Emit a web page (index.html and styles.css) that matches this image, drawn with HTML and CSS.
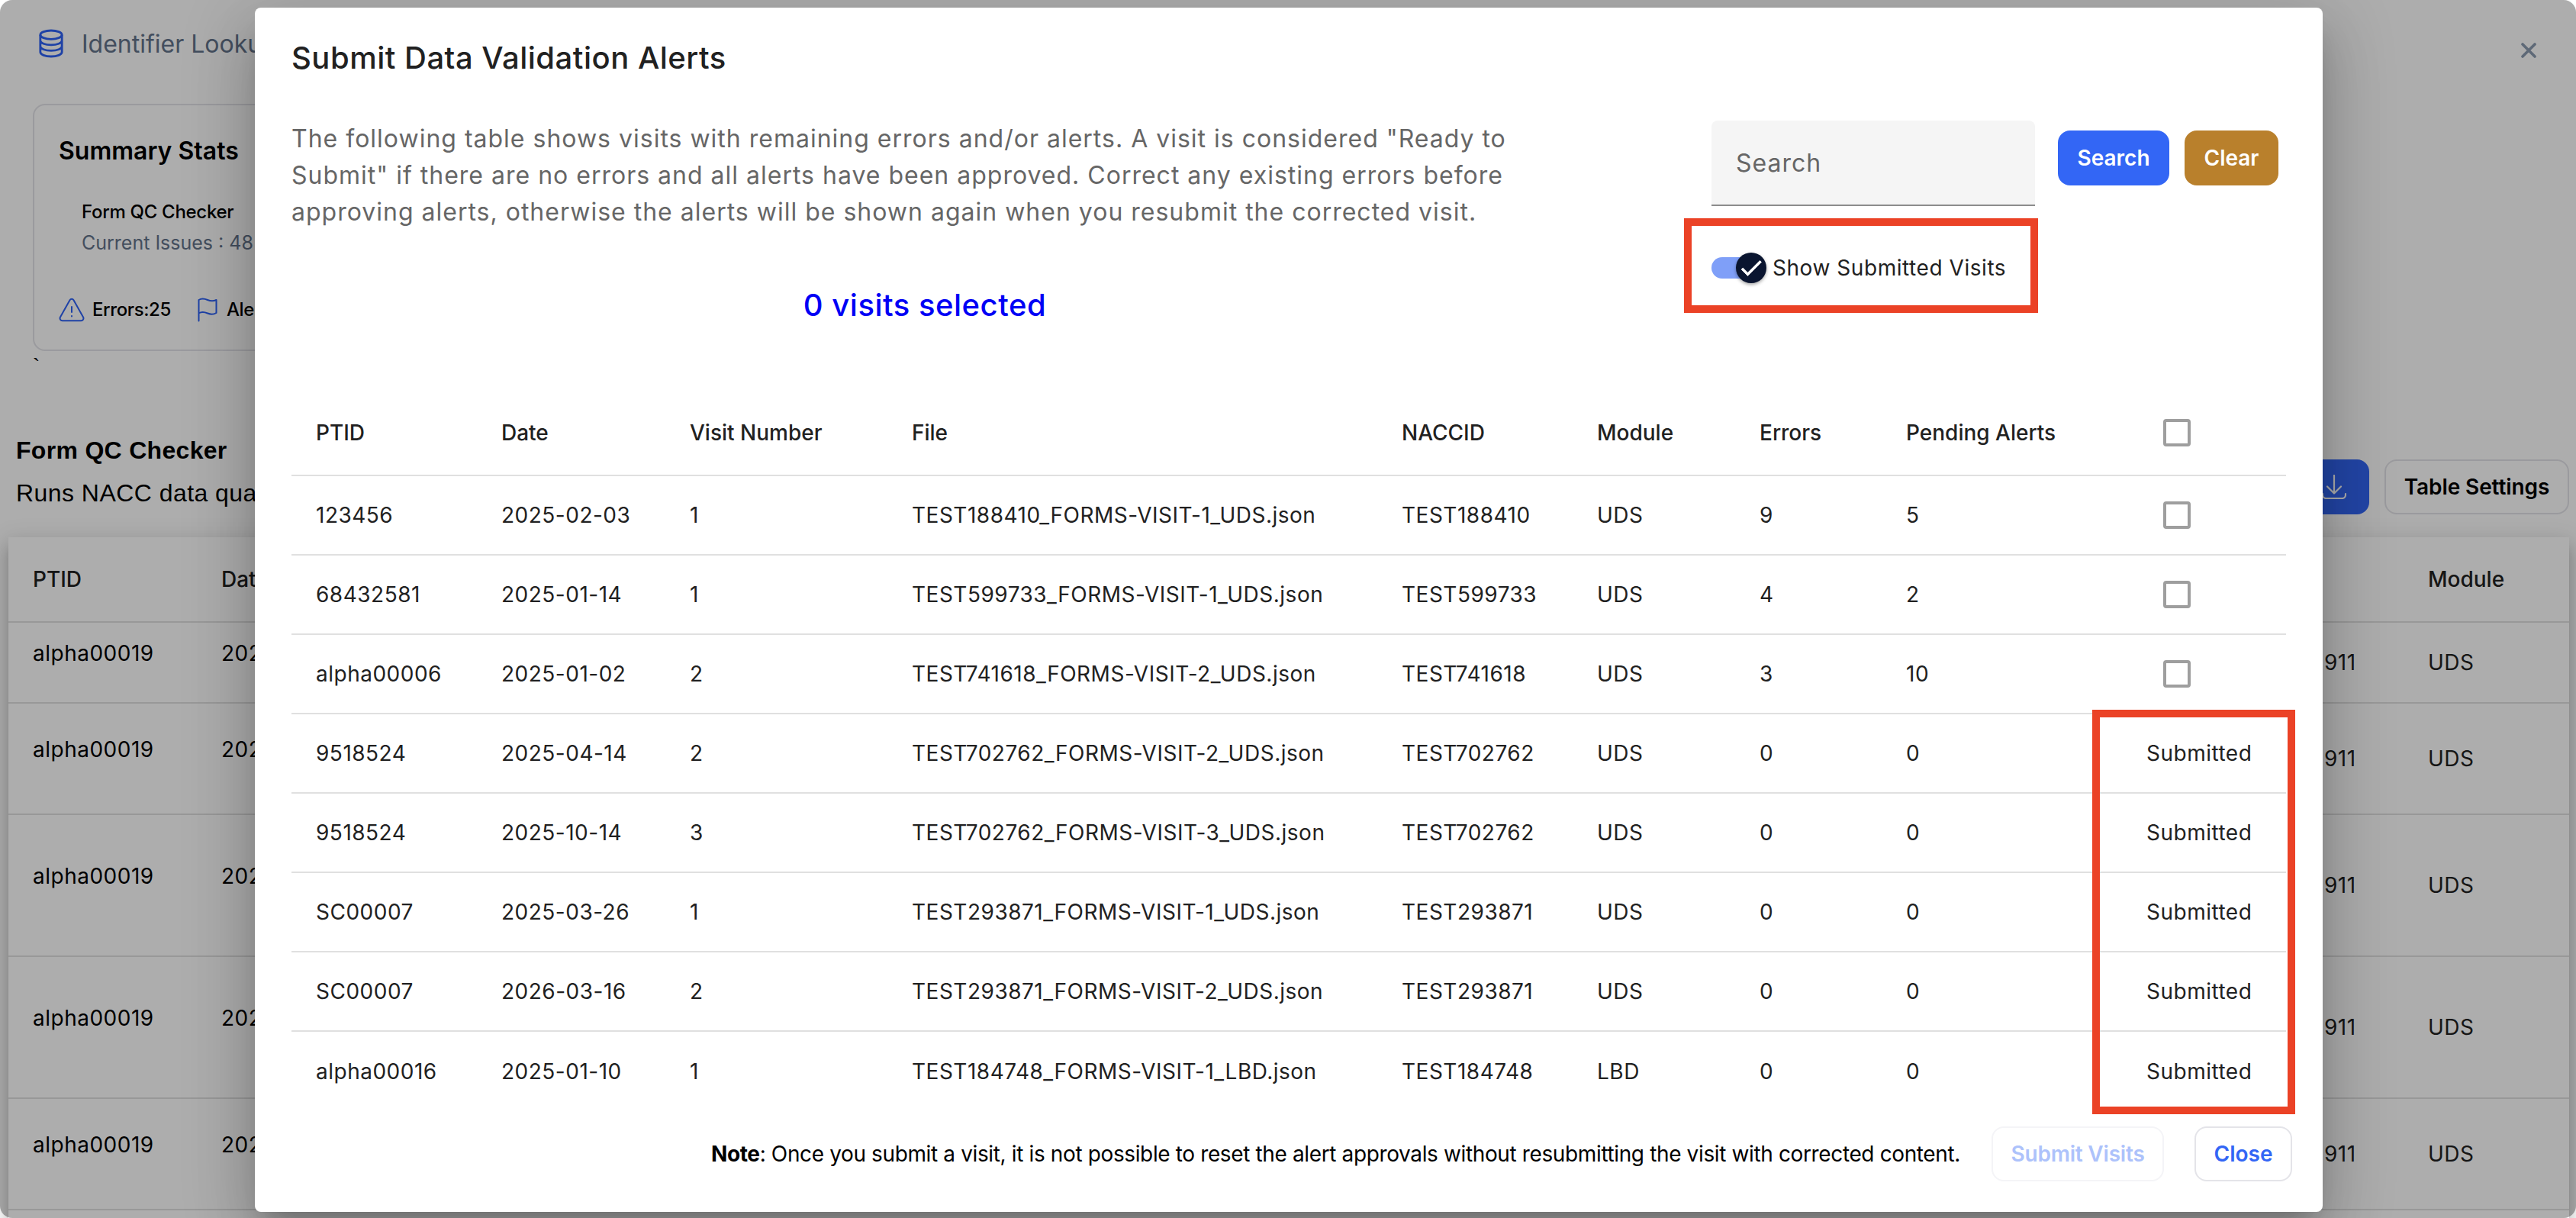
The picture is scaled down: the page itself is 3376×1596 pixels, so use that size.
FILE: index.html
```html
<!DOCTYPE html>
<html lang="en">
<head>
    <meta charset="UTF-8">
    <meta name="viewport" content="width=device-width, initial-scale=1.0">
    <title>Submit Data Validation Alerts</title>
    <link rel="stylesheet" href="styles.css">
</head>
<body>
    <div class="page">
        <header class="topbar">
            <svg class="icon-db" viewBox="0 0 36 40" fill="none" stroke="#2f62f5" stroke-width="3">
                <ellipse cx="18" cy="8" rx="15" ry="6"/>
                <path d="M3 8v24c0 3.300 6.700 6 15 6s15-2.700 15-6V8M3 16c0 3.300 6.700 6 15 6s15-2.700 15-6M3 24c0 3.300 6.700 6 15 6s15-2.700 15-6"/>
            </svg>
            <span class="topbar-title">Identifier Lookup</span>
            <svg class="icon-close" viewBox="0 0 20 20" stroke="#8b9bb0" stroke-width="3.6" stroke-linecap="round">
                <path d="M2 2l16 16M18 2L2 18"/>
            </svg>
        </header>

        <section class="stats">
            <h2>Summary Stats</h2>
            <p class="stats-name">Form QC Checker</p>
            <p class="stats-issues">Current Issues : 48</p>
            <div class="stats-counts">
                <svg class="icon-warn" viewBox="0 0 34 32" fill="none" stroke="#2f62f5" stroke-width="2" stroke-linecap="round" stroke-linejoin="round">
                    <path d="M14.500 3.200L2 25.500a3.200 3.200 0 0 0 2.800 4.800h24.400a3.200 3.200 0 0 0 2.800-4.800L19.500 3.200a2.900 2.900 0 0 0-5 0zM17 12v7M17 24v.6"/>
                </svg>
                <span>Errors:25</span>
                <svg class="icon-flag" viewBox="0 0 26 32" fill="none" stroke="#2f62f5" stroke-width="2" stroke-linecap="round" stroke-linejoin="round">
                    <path d="M1.500 30.500V3c4-2.500 8-1.500 11.500 0s7.500 2 11.500 0v17c-4 2.500-8 2-11.500.5s-7.500-2.500-11.500 0"/>
                </svg>
                <span>Alerts:</span>
            </div>
        </section>
        <div class="tick">`</div>

        <div class="checker">
            <div>
                <h3>Form QC Checker</h3>
                <p>Runs NACC data quality</p>
            </div>
            <div class="checker-actions">
                <div class="btn-download">
                    <svg viewBox="0 0 32 32" fill="none" stroke="#fff" stroke-width="2.200" stroke-linecap="round" stroke-linejoin="round">
                        <path d="M16 1v23.500M7 15.500l9 9 9-9"/>
                        <path d="M1 25v1.500c0 2.500 2 4.500 4.500 4.500h21c2.500 0 4.500-2 4.500-4.500V25"/>
                    </svg>
                </div>
                <div class="btn-settings">Table Settings</div>
            </div>
        </div>

        <div class="bg-table">
            <div class="bg-row bg-head"><span>PTID</span><span>Date</span><span></span><span>Module</span></div>
            <div class="bg-row h1"><span>alpha00019</span><span>2025</span><span>911</span><span>UDS</span></div>
            <div class="bg-row h2"><span>alpha00019</span><span>2025</span><span>911</span><span>UDS</span></div>
            <div class="bg-row h3"><span>alpha00019</span><span>2025</span><span>911</span><span>UDS</span></div>
            <div class="bg-row h3"><span>alpha00019</span><span>2025</span><span>911</span><span>UDS</span></div>
            <div class="bg-row h2"><span>alpha00019</span><span>2025</span><span>911</span><span>UDS</span></div>
        </div>
    </div>

    <div class="backdrop"></div>

    <div class="dialog">
        <h1>Submit Data Validation Alerts</h1>
        <div class="intro">
            <div class="intro-text">
                <p>The following table shows visits with remaining errors and/or alerts. A visit is considered "Ready to<br>Submit" if there are no errors and all alerts have been approved. Correct any existing errors before<br>approving alerts, otherwise the alerts will be shown again when you resubmit the corrected visit.</p>
                <div class="selected">0 visits selected</div>
            </div>
            <div class="filters">
                <div class="search-row">
                    <div class="search-input">Search</div>
                    <button class="btn btn-search">Search</button>
                    <button class="btn btn-clear">Clear</button>
                </div>
                <div class="toggle-row">
                    <div class="toggle">
                        <div class="knob">
                            <svg viewBox="0 0 24 24" fill="#fff" stroke="#fff" stroke-width=".5"><path d="M9 16.200 4.800 12l-1.400 1.400L9 19 21 7l-1.400-1.400z"/></svg>
                        </div>
                    </div>
                    <span>Show Submitted Visits</span>
                    <div class="mark mark-toggle"></div>
                </div>
            </div>
        </div>

        <div class="visits">
            <div class="row head"><span>PTID</span><span>Date</span><span>Visit Number</span><span>File</span><span>NACCID</span><span>Module</span><span>Errors</span><span>Pending Alerts</span><span><i class="check"></i></span></div>
            <div class="row"><span>123456</span><span>2025-02-03</span><span>1</span><span>TEST188410_FORMS-VISIT-1_UDS.json</span><span>TEST188410</span><span>UDS</span><span>9</span><span>5</span><span><i class="check"></i></span></div>
            <div class="row"><span>68432581</span><span>2025-01-14</span><span>1</span><span>TEST599733_FORMS-VISIT-1_UDS.json</span><span>TEST599733</span><span>UDS</span><span>4</span><span>2</span><span><i class="check"></i></span></div>
            <div class="row"><span>alpha00006</span><span>2025-01-02</span><span>2</span><span>TEST741618_FORMS-VISIT-2_UDS.json</span><span>TEST741618</span><span>UDS</span><span>3</span><span>10</span><span><i class="check"></i></span></div>
            <div class="row"><span>9518524</span><span>2025-04-14</span><span>2</span><span>TEST702762_FORMS-VISIT-2_UDS.json</span><span>TEST702762</span><span>UDS</span><span>0</span><span>0</span><span>Submitted</span></div>
            <div class="row"><span>9518524</span><span>2025-10-14</span><span>3</span><span>TEST702762_FORMS-VISIT-3_UDS.json</span><span>TEST702762</span><span>UDS</span><span>0</span><span>0</span><span>Submitted</span></div>
            <div class="row"><span>SC00007</span><span>2025-03-26</span><span>1</span><span>TEST293871_FORMS-VISIT-1_UDS.json</span><span>TEST293871</span><span>UDS</span><span>0</span><span>0</span><span>Submitted</span></div>
            <div class="row"><span>SC00007</span><span>2026-03-16</span><span>2</span><span>TEST293871_FORMS-VISIT-2_UDS.json</span><span>TEST293871</span><span>UDS</span><span>0</span><span>0</span><span>Submitted</span></div>
            <div class="row"><span>alpha00016</span><span>2025-01-10</span><span>1</span><span>TEST184748_FORMS-VISIT-1_LBD.json</span><span>TEST184748</span><span>LBD</span><span>0</span><span>0</span><span>Submitted</span></div>
            <div class="mark mark-submitted"></div>
        </div>

        <div class="actions">
            <p><b>Note</b>: Once you submit a visit, it is not possible to reset the alert approvals without resubmitting the visit with corrected content.</p>
            <button class="btn btn-submit" disabled>Submit Visits</button>
            <button class="btn btn-close">Close</button>
        </div>
    </div>
</body>
</html>
```
FILE: styles.css
```css
* {
    box-sizing: border-box;
}
body {
    margin: 0;
    width: 3376px;
    height: 1596px;
    overflow: hidden;
    position: relative;
    background: #fff;
    font-family: Inter, Roboto, sans-serif;
    color: #000;
}
h1, h2, h3, p {
    margin: 0;
}

/* Page behind the dialog */
.page {
    height: 1596px;
    overflow: hidden;
}
.topbar {
    display: flex;
    align-items: center;
    height: 136px;
    padding: 0 52px 22px 50px;
}
.icon-db {
    width: 34px;
    height: 38px;
}
.topbar-title {
    margin-left: 23px;
    font-size: 32px;
    color: #64748b;
}
.icon-close {
    width: 20px;
    height: 20px;
    margin-left: auto;
    margin-top: 18px;
}
.stats {
    width: 900px;
    height: 324px;
    margin-left: 43px;
    padding: 38px 32px;
    border: 2px solid #e4e4e9;
    border-radius: 16px;
}
.stats h2 {
    font-size: 32px;
    font-weight: 600;
    line-height: 44px;
}
.stats-name {
    margin: 38px 0 0 30px;
    font-size: 24px;
    font-weight: 500;
    line-height: 40px;
    letter-spacing: -.3px;
}
.stats-issues {
    margin-left: 30px;
    font-size: 25px;
    line-height: 40px;
    color: #64748b;
}
.stats-counts {
    display: flex;
    align-items: center;
    margin-top: 48px;
    font-size: 24px;
    font-weight: 500;
    line-height: 40px;
    letter-spacing: -.4px;
}
.icon-warn {
    width: 34px;
    height: 32px;
    margin-right: 10px;
}
.icon-flag {
    width: 26px;
    height: 32px;
    margin: 0 12px 0 35px;
}
.tick {
    height: 90px;
    padding: 4px 0 0 43px;
    font-family: "Liberation Sans", Arial, sans-serif;
    font-size: 28px;
}
.checker {
    display: flex;
    justify-content: space-between;
    height: 154px;
    padding: 10px 9px 0 21px;
    font-family: "Liberation Sans", Arial, sans-serif;
    font-size: 32px;
}
.checker h3 {
    margin-top: 6px;
    font-size: 32px;
    line-height: 48px;
    letter-spacing: .3px;
}
.checker p {
    margin-top: 8px;
    line-height: 48px;
    letter-spacing: .45px;
}
.checker-actions {
    display: flex;
    gap: 20px;
    margin-top: 42px;
    font-family: Inter, sans-serif;
}
.btn-download {
    display: flex;
    align-items: center;
    width: 124px;
    height: 72px;
    padding-left: 62px;
    border-radius: 16px;
    background: #3366f5;
}
.btn-download svg {
    width: 32px;
    height: 32px;
}
.btn-settings {
    width: 242px;
    height: 72px;
    border: 2px solid #e4e4e9;
    border-radius: 16px;
    font-size: 28px;
    font-weight: 600;
    line-height: 69px;
    letter-spacing: -.1px;
    text-align: center;
    white-space: nowrap;
}
.bg-table {
    margin: 0 9px 0 11px;
    box-shadow: 0 10px 10px -6px rgba(0, 0, 0, .2), 0 16px 20px 2px rgba(0, 0, 0, .14), 0 6px 28px 4px rgba(0, 0, 0, .12);
    background: #fff;
    height: 940px;
}
.bg-row {
    display: grid;
    grid-template-columns: 247px 2756px 136px 217px;
    align-items: center;
    border-bottom: 2px solid #e0e0e0;
    font-size: 28px;
    letter-spacing: .5px;
    color: #212121;
}
.bg-row span:nth-child(-n+2) {
    padding-left: 32px;
    margin-top: -24px;
    color: #000;
}
.bg-row span:nth-child(3) {
    padding-left: 32px;
}
.bg-row span:nth-child(4) {
    padding-left: 32px;
}
.bg-row.bg-head {
    height: 112px;
    font-weight: 500;
    letter-spacing: 0;
}
.bg-row.bg-head span {
    margin-top: 0;
    color: #212121;
}
.h1 { height: 106px; }
.h2 { height: 146px; }
.h3 { height: 186px; }

.backdrop {
    position: absolute;
    inset: 0;
    border-radius: 16px;
    background: rgba(0, 0, 0, .32);
}

/* Dialog */
.dialog {
    position: absolute;
    left: 334px;
    top: 10px;
    width: 2710px;
    height: 1578px;
    padding: 0 48px;
    border-radius: 8px;
    background: #fff;
    color: #212121;
    box-shadow: 0 22px 30px -14px rgba(0, 0, 0, .2), 0 48px 76px 6px rgba(0, 0, 0, .14), 0 18px 92px 16px rgba(0, 0, 0, .12);
}
.dialog h1 {
    height: 148px;
    padding-top: 34px;
    font-size: 40px;
    font-weight: 500;
    line-height: 64px;
    letter-spacing: .5px;
}
.intro {
    display: flex;
    justify-content: space-between;
    height: 353px;
}
.intro-text p {
    font-size: 32px;
    line-height: 48px;
    letter-spacing: 1px;
    color: #666;
    white-space: nowrap;
}
.selected {
    width: 1660px;
    margin-top: 66px;
    font-size: 40px;
    font-weight: 500;
    line-height: 64px;
    letter-spacing: .5px;
    text-align: center;
    color: #0000f5;
}
.filters {
    width: 753px;
}
.search-row {
    display: flex;
    align-items: flex-start;
}
.search-input {
    width: 424px;
    height: 112px;
    margin-right: 30px;
    padding-left: 32px;
    border-bottom: 2px solid #8c8c8c;
    border-radius: 8px 8px 0 0;
    background: #f5f5f5;
    font-size: 32px;
    line-height: 112px;
    letter-spacing: 1px;
    color: #666;
}
.btn {
    height: 72px;
    padding: 0;
    border: none;
    border-radius: 16px;
    font-family: inherit;
    font-size: 28px;
    font-weight: 600;
    color: #fff;
}
.btn-search {
    width: 146px;
    margin: 13px 20px 0 0;
    background: #3366f5;
}
.btn-clear {
    width: 123px;
    margin-top: 13px;
    background: #b9802c;
}
.toggle-row {
    position: relative;
    display: flex;
    align-items: center;
    height: 80px;
    margin-top: 41px;
    font-size: 28px;
    letter-spacing: .55px;
}
.toggle {
    width: 72px;
    height: 28px;
    margin-right: 8px;
    border-radius: 14px;
    background: linear-gradient(90deg, #7f9ff8 60px, transparent 60px);
}
.knob {
    width: 40px;
    height: 40px;
    margin: -6px 0 0 32px;
    padding: 2px;
    border-radius: 50%;
    background: #0a1530;
    box-shadow: 0 2px 4px rgba(0, 0, 0, .35);
}
.knob svg {
    display: block;
    width: 36px;
    height: 36px;
}

/* Red callouts */
.mark {
    position: absolute;
    border: 10px solid #eb4226;
}
.mark-toggle {
    left: -36px;
    top: -25px;
    width: 464px;
    height: 124px;
}
.mark-submitted {
    left: 2360px;
    top: 419px;
    width: 266px;
    height: 530px;
}

/* Visits table */
.visits {
    position: relative;
    width: 2614px;
    height: 950px;
}
.row {
    display: grid;
    grid-template-columns: 243px 247px 291px 642px 256px 213px 192px 315px 215px;
    align-items: center;
    height: 104px;
    border-bottom: 2px solid #e0e0e0;
    font-size: 28px;
    letter-spacing: .5px;
    white-space: nowrap;
}
.row span {
    padding-left: 32px;
}
.row.head {
    height: 113px;
    font-weight: 500;
    letter-spacing: 0;
}
.row:nth-child(9) {
    border-bottom: none;
}
.check {
    display: block;
    width: 36px;
    height: 36px;
    margin-left: 22px;
    border: 4px solid #9e9e9e;
    border-radius: 4px;
}

/* Dialog footer */
.actions {
    display: flex;
    align-items: center;
    justify-content: flex-end;
    height: 80px;
    margin: 11px -8px 0 0;
}
.actions p {
    margin-right: 41px;
    font-size: 28px;
    letter-spacing: -.37px;
    color: #000;
    white-space: nowrap;
}
.btn-submit {
    width: 226px;
    margin-right: 40px;
    border: 2px solid #f4f4f7;
    background: #fff;
    color: #adc2fb;
    letter-spacing: -.2px;
}
.btn-close {
    width: 128px;
    border: 2px solid #e4e4e9;
    background: #fff;
    color: #3366f5;
}
```
